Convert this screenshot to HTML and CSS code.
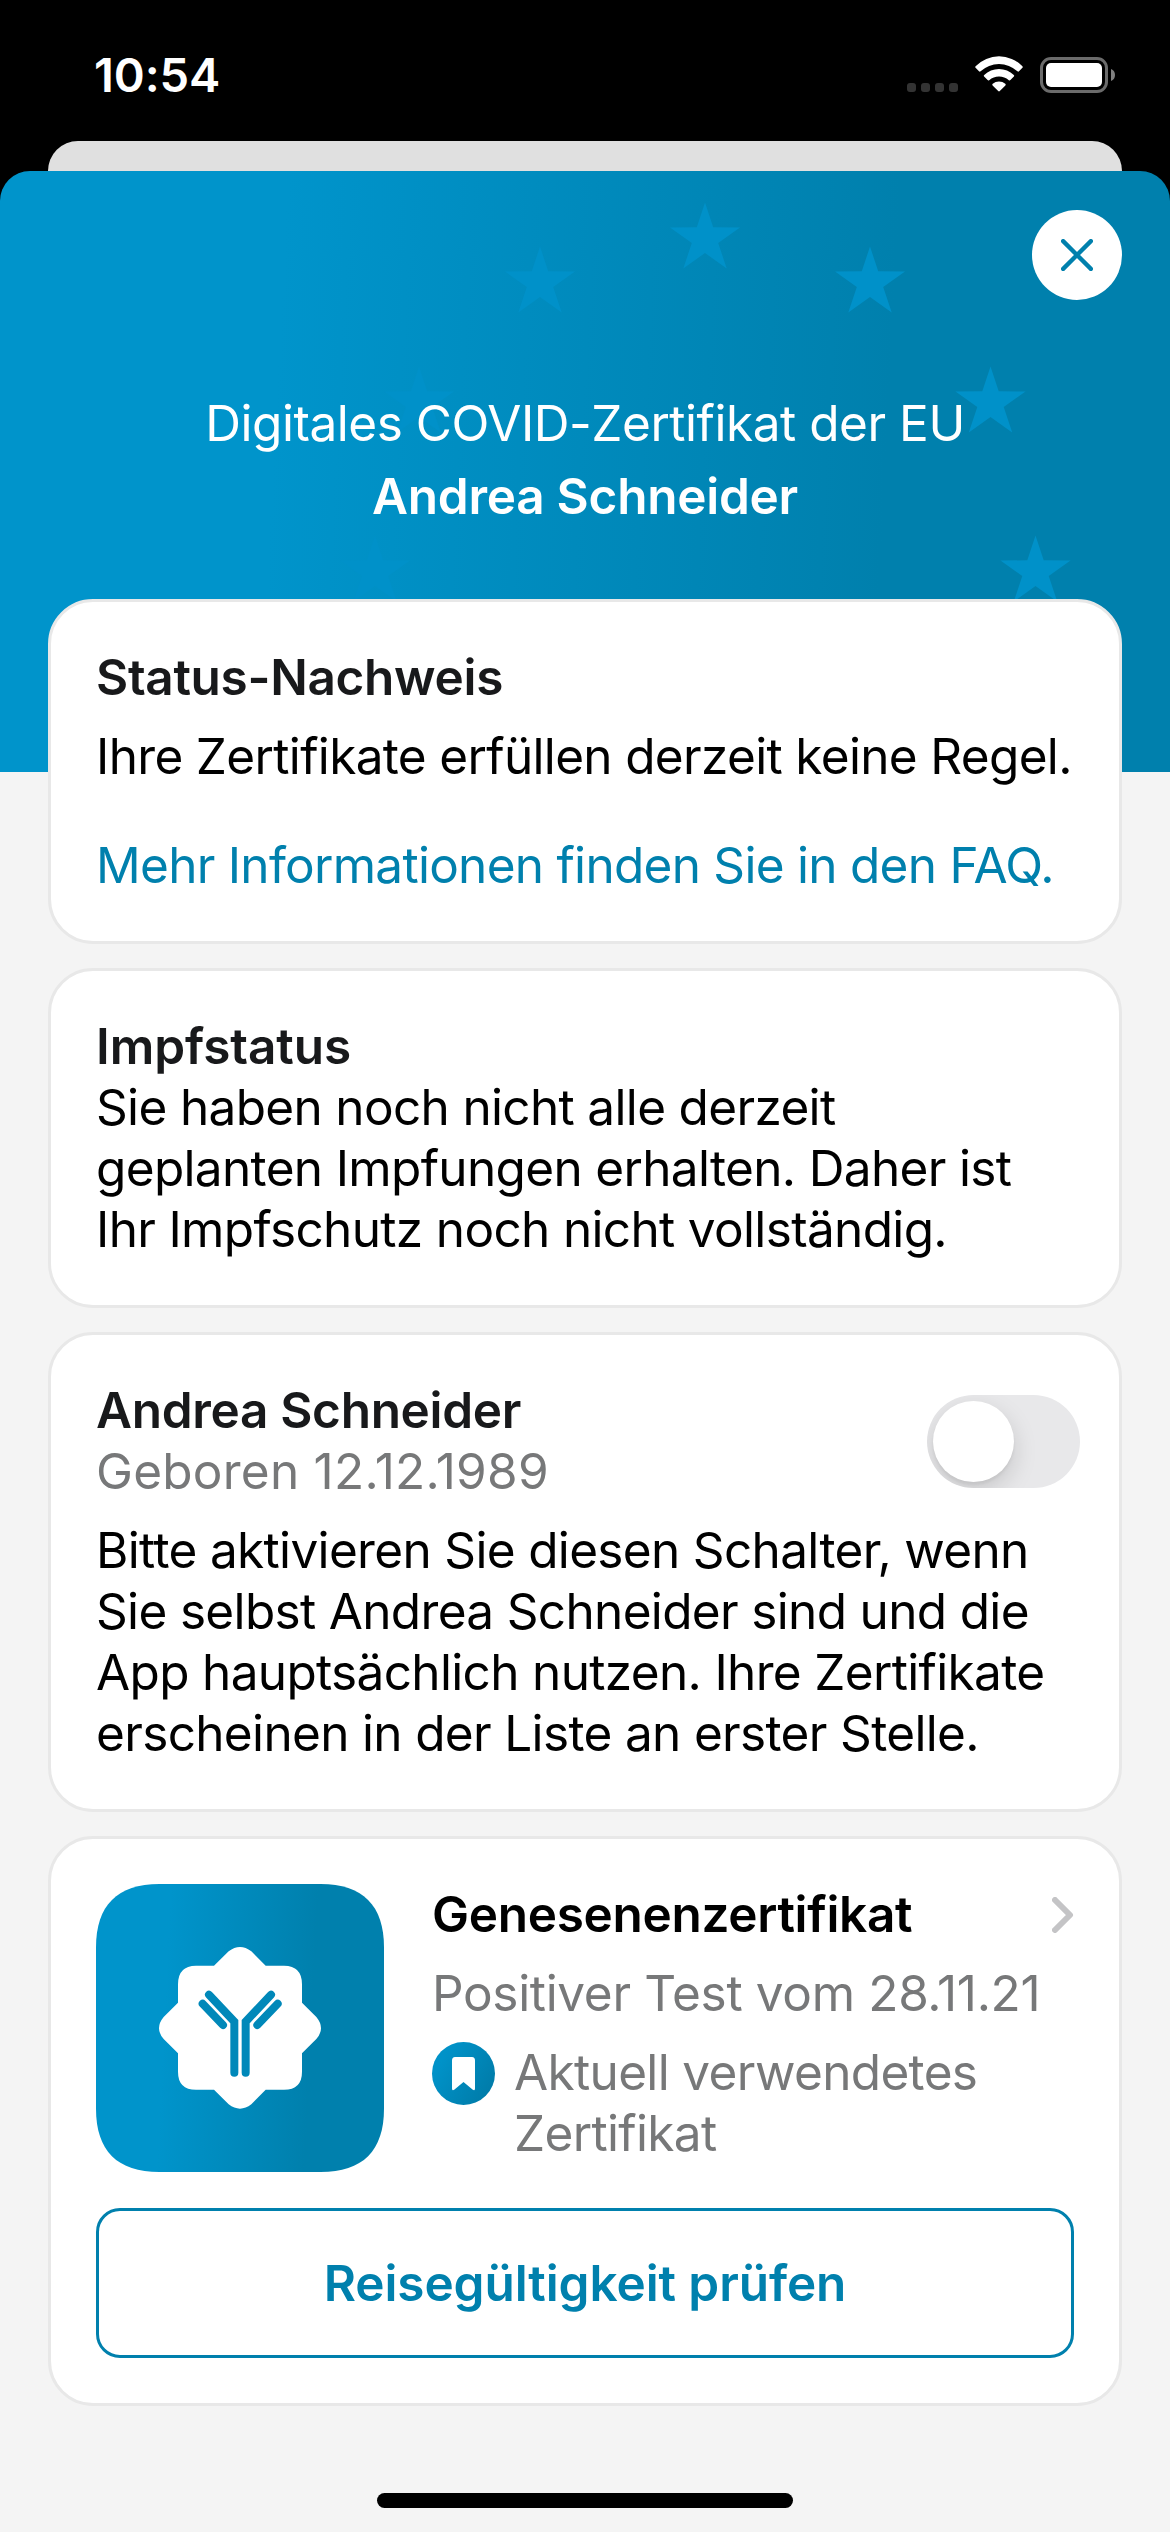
FILE: index.html
```html
<!DOCTYPE html>
<html lang="de">
<head>
<meta charset="utf-8">
<title>Digitales COVID-Zertifikat der EU</title>
<link rel="stylesheet" href="styles.css">
</head>
<body>
<header class="status-bar">
  <span class="clock">10:54</span>
  <div class="indicators">
    <div class="signal"><i></i><i></i><i></i><i></i></div>
    <svg class="wifi" viewBox="0 0 48 36" fill="#fff">
      <path d="M.6 10.2A32.7 32.7 0 0 1 47.4 10.2Q48.2 11 47.4 11.8L44 15.3Q43.2 16 42.4 15.3A27 27 0 0 0 5.600 15.300Q4.800 16 4 15.300L.6 11.800Q-.2 11 .6 10.200Z"/>
      <path d="M9.200 19A21 21 0 0 1 38.800 19Q39.700 19.800 38.900 20.600L35.400 24.100Q34.600 24.900 33.800 24.200A15 15 0 0 0 14.200 24.200Q13.400 24.900 12.600 24.100L9.100 20.600Q8.300 19.800 9.200 19Z"/>
      <path d="M17.700 27.800A9.500 9.500 0 0 1 30.300 27.800Q31.200 28.600 30.400 29.400L24.800 35.100Q24 35.900 23.200 35.100L17.600 29.400Q16.800 28.600 17.700 27.800Z"/>
    </svg>
    <svg class="battery" viewBox="0 0 76 36">
      <rect x="1.500" y="1.500" width="65" height="33" rx="9.500" fill="none" stroke="#6b6b6b" stroke-width="3"/>
      <rect x="6" y="6" width="56" height="24" rx="5" fill="#fff"/>
      <path d="M71 12Q75 13.500 75 18T71 24Z" fill="#808080"/>
    </svg>
  </div>
</header>
<div class="backdrop-sheet"></div>
<main class="sheet">
  <svg class="stars" viewBox="0 0 1170 601" fill="#0091c9">
    <defs><path id="star" d="M0-36.500 8.200-11.700 35-11.500 13.200 4 21.700 29.500 0 14-21.700 29.500-13.200 4-35-11.500-8.200-11.700Z"/></defs>
    <use href="#star" x="375" y="401"/>
    <use href="#star" x="419" y="232"/>
    <use href="#star" x="540" y="112"/>
    <use href="#star" x="705" y="68"/>
    <use href="#star" x="870" y="112"/>
    <use href="#star" x="990.500" y="232"/>
    <use href="#star" x="1035.500" y="401"/>
  </svg>
  <div class="hero">
    <button class="close" aria-label="Schließen">
      <svg viewBox="0 0 30 30"><path d="M2 2 28 28M28 2 2 28" stroke="#0080ad" stroke-width="4" stroke-linecap="round"/></svg>
    </button>
    <h1 class="hero-text"><span class="hero-label">Digitales COVID-Zertifikat der EU</span><span class="hero-name">Andrea Schneider</span></h1>
  </div>
  <div class="cards">
    <section class="card">
      <h2 class="title">Status-Nachweis</h2>
      <p class="text spaced">Ihre Zertifikate erfüllen derzeit keine Regel.</p>
      <a class="text link">Mehr Informationen finden Sie in den FAQ.</a>
    </section>
    <section class="card">
      <h2 class="title wide">Impfstatus</h2>
      <p class="text">Sie haben noch nicht alle derzeit<br>geplanten Impfungen erhalten. Daher ist<br>Ihr Impfschutz noch nicht vollständig.</p>
    </section>
    <section class="card">
      <div class="person">
        <div>
          <h2 class="title">Andrea Schneider</h2>
          <p class="text muted born">Geboren 12.12.1989</p>
        </div>
        <div class="switch"><div class="knob"></div></div>
      </div>
      <p class="text spaced">Bitte aktivieren Sie diesen Schalter, wenn<br>Sie selbst Andrea Schneider sind und die<br>App hauptsächlich nutzen. Ihre Zertifikate<br>erscheinen in der Liste an erster Stelle.</p>
    </section>
    <section class="card">
      <div class="certificate">
        <svg class="tile" viewBox="0 0 864 864">
          <defs>
            <linearGradient id="blue" x1="0" y1="0" x2="1" y2="0.050">
              <stop offset="0.260" stop-color="#0094cb"/>
              <stop offset="0.770" stop-color="#0080ad"/>
            </linearGradient>
          </defs>
          <path fill="url(#blue)" d="M190 0H674C800 0 864 64 864 190V674C864 800 800 864 674 864H190C64 864 0 800 0 674V190C0 64 64 0 190 0Z"/>
          <g transform="translate(-48 -72)">
            <path fill="#fff" d="M402 317 446 274Q480 248 514 274L557 317H612Q666 317 666 373V428L709 471Q737 505 709 537L666 580V635Q666 689 612 689H557L514 733Q480 759 446 733L402 689H348Q294 689 294 635V580L251 537Q223 505 251 471L294 428V373Q294 317 348 317Z"/>
            <path fill="none" stroke="#0088b9" stroke-width="24" stroke-linecap="round" d="M387 404 463 485V638M573 404 497 485V638M368 431 429 495M593 431 532 495"/>
          </g>
        </svg>
        <div class="details">
          <div class="details-head">
            <h2 class="title black">Genesenenzertifikat</h2>
            <svg class="chevron" viewBox="0 0 22 36"><path d="M3 3 18 18 3 33" fill="none" stroke="#c4c4c6" stroke-width="6" stroke-linecap="round" stroke-linejoin="round"/></svg>
          </div>
          <p class="text muted test">Positiver Test vom 28.11.21</p>
          <div class="current">
            <svg class="bookmark" viewBox="0 0 63 63">
              <defs><linearGradient id="badge" x1="0" y1="0.200" x2="1" y2="0.800"><stop offset="0.150" stop-color="#0092c8"/><stop offset="0.900" stop-color="#007dab"/></linearGradient></defs>
              <circle cx="31.500" cy="31.500" r="31.500" fill="url(#badge)"/>
              <path fill="#fff" d="M23 15H40Q43 15 43 18.500V46.500Q43 49.500 40.500 47.500L31.500 40 22.500 47.500Q20 49.500 20 46.500V18.500Q20 15 23 15Z"/>
            </svg>
            <p class="text muted">Aktuell verwendetes<br>Zertifikat</p>
          </div>
        </div>
      </div>
      <button class="check">Reisegültigkeit prüfen</button>
    </section>
  </div>
  <div class="home-indicator"></div>
</main>
</body>
</html>
```
FILE: styles.css
```css
* { box-sizing: border-box; }

body {
  margin: 0;
  width: 1170px;
  height: 2532px;
  background: #000;
  font-family: Inter, "Liberation Sans", sans-serif;
  font-size: 49.5px;
  line-height: 61px;
  display: flex;
  flex-direction: column;
  overflow: hidden;
}

h1, h2, p { margin: 0; font-weight: 400; font-size: inherit; }
svg { display: block; }

button {
  font: inherit;
  padding: 0;
  border: 0;
  background: none;
}

.status-bar {
  flex: none;
  height: 141px;
  padding: 0 54px 0 94px;
  display: flex;
  justify-content: space-between;
  align-items: flex-start;
  color: #fff;
}

.clock {
  margin-top: 44px;
  font-size: 47px;
  font-weight: 600;
  letter-spacing: -0.1px;
}

.indicators {
  display: flex;
  align-items: flex-end;
  margin-top: 56px;
}

.signal { display: flex; gap: 5px; margin-right: 17px; padding-bottom: 1px; }
.signal i { width: 9px; height: 9px; border-radius: 3px; background: #333; }
.wifi { width: 48px; height: 36px; margin-right: 17px; margin-bottom: 1px; }
.battery { width: 76px; height: 36px; }

.backdrop-sheet {
  flex: none;
  height: 30px;
  margin: 0 48px;
  border-radius: 30px 30px 0 0;
  background: #e0e0e0;
}

.sheet {
  position: relative;
  flex: 1;
  display: flex;
  flex-direction: column;
  border-radius: 30px 30px 0 0;
  background: linear-gradient(93deg, #0094cb 24%, #0080ad 75%) 0 0 / 100% 601px no-repeat #f4f4f4;
  overflow: hidden;
}

.stars {
  position: absolute;
  top: 0;
  left: 0;
  width: 1170px;
  height: 601px;
}

.hero {
  position: relative;
  flex: none;
  height: 428px;
  padding: 39px 48px 0;
  display: flex;
  flex-direction: column;
  color: #fff;
}

.close {
  align-self: flex-end;
  width: 90px;
  height: 90px;
  border-radius: 50%;
  background: #fff;
  display: flex;
  align-items: center;
  justify-content: center;
}
.close svg { width: 32px; height: 32px; }

.hero-text {
  margin-top: 93px;
  display: flex;
  flex-direction: column;
  align-items: center;
  gap: 12px;
}
.hero-label { letter-spacing: -0.46px; }
.hero-name { font-weight: 600; letter-spacing: -0.25px; }

.cards {
  position: relative;
  padding: 0 48px;
  display: flex;
  flex-direction: column;
  gap: 24px;
}

.card {
  border: 3px solid #e8e8e8;
  border-radius: 45px;
  background: #fff;
  padding: 45px;
  display: flex;
  flex-direction: column;
}

.title {
  font-weight: 600;
  letter-spacing: -0.31px;
  color: #18191b;
}
.title.wide { letter-spacing: -0.06px; }
.title.black { color: #000; }

.text {
  color: #000;
  letter-spacing: -0.66px;
  white-space: nowrap;
}
.text.spaced { margin-top: 18px; }
.text.link { margin-top: 48px; color: #0080ad; letter-spacing: -0.72px; }
.text.muted { color: #777879; }
.text.born { letter-spacing: 0.25px; }
.text.test { letter-spacing: -0.33px; }

.person { display: flex; justify-content: space-between; }

.switch {
  width: 153px;
  height: 93px;
  margin: 15px -6px 0 0;
  padding: 6px;
  border-radius: 47px;
  background: #e8e8ea;
  overflow: hidden;
}
.knob {
  width: 81px;
  height: 81px;
  border-radius: 50%;
  background: #fff;
  box-shadow: 0 9px 24px rgba(0, 0, 0, 0.15), 0 3px 3px rgba(0, 0, 0, 0.05);
}

.certificate { display: flex; gap: 48px; }
.tile { flex: none; width: 288px; height: 288px; }

.details {
  flex: 1;
  display: flex;
  flex-direction: column;
  gap: 18px;
}
.details-head { display: flex; justify-content: space-between; align-items: center; }
.chevron { width: 22px; height: 36px; }

.current { display: flex; gap: 19px; }
.bookmark { flex: none; width: 63px; height: 63px; }

.check {
  height: 150px;
  margin-top: 36px;
  border: 3px solid #0080ad;
  border-radius: 24px;
  color: #0080ad;
  font-weight: 600;
  letter-spacing: -0.08px;
}

.home-indicator {
  width: 416px;
  height: 15px;
  margin: auto auto 24px;
  border-radius: 8px;
  background: #000;
}
```
